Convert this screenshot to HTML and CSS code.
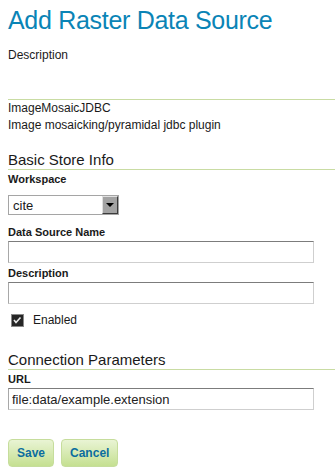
FILE: index.html
```html
<!DOCTYPE html>
<html lang="en">
<head>
    <meta charset="UTF-8">
    <meta name="viewport" content="width=device-width, initial-scale=1.0">
    <title>Add Raster Data Source</title>
    <link rel="stylesheet" href="styles.css">
</head>
<body>
    <div class="page">
        <h1 class="page-title">Add Raster Data Source</h1>
        <p class="page-desc">Description</p>

        <div class="store-type">
            <p>ImageMosaicJDBC</p>
            <p>Image mosaicking/pyramidal jdbc plugin</p>
        </div>

        <h3 class="section-title">Basic Store Info</h3>
        <label class="field-label">Workspace</label>
        <div class="select">
            <span class="select-value">cite</span>
            <span class="select-arrow"><span class="tri"></span></span>
        </div>

        <label class="field-label">Data Source Name</label>
        <input type="text" class="text-input">

        <label class="field-label label-tight">Description</label>
        <input type="text" class="text-input">

        <div class="check-row">
            <svg class="checkbox" width="13" height="13" viewBox="0 0 13 13">
                <rect x="0" y="0" width="13" height="13" fill="#8a8a8a"/>
                <rect x="1" y="1" width="11" height="11" fill="#262626"/>
                <polyline points="3,6 5,8.5 9.5,3.5" fill="none" stroke="#e8e8e8" stroke-width="1.6"/>
            </svg>
            <span>Enabled</span>
        </div>

        <h3 class="section-title section-conn">Connection Parameters</h3>
        <label class="field-label">URL</label>
        <input type="text" class="text-input" value="file:data/example.extension">

        <div class="buttons">
            <button class="btn">Save</button>
            <button class="btn">Cancel</button>
        </div>
    </div>
</body>
</html>
```

FILE: styles.css
```css
* {
    box-sizing: border-box;
    margin: 0;
    padding: 0;
}

body {
    font-family: "Liberation Sans", Arial, sans-serif;
    font-size: 12px;
    color: #1a1a1a;
    background: #fff;
}

.page {
    padding-left: 8px;
}

.page-title {
    font-size: 25px;
    font-weight: normal;
    line-height: 30px;
    letter-spacing: -0.3px;
    color: #0a84b6;
    margin-top: 5px;
}

.page-desc {
    line-height: 16px;
    margin-top: 12px;
}

.store-type {
    margin-top: 36px;
    border-top: 1px solid #c9dca3;
    line-height: 17px;
}

.section-title {
    font-size: 15px;
    font-weight: normal;
    line-height: 18px;
    margin-top: 17px;
    border-bottom: 1px solid #c9dca3;
}

.section-conn {
    margin-top: 24px;
}

.field-label {
    display: block;
    font-size: 11px;
    font-weight: bold;
    line-height: 14px;
    margin-top: 2px;
}

.select {
    display: flex;
    align-items: center;
    width: 111px;
    height: 20px;
    margin-top: 9px;
    border: 1px solid #a5a5a5;
    background: #fff;
}

.select-value {
    flex: 1;
    font-size: 13px;
    padding-left: 4px;
}

.select-arrow {
    display: flex;
    align-items: center;
    justify-content: center;
    width: 16px;
    height: 18px;
    background: #a3a3a3;
    border: 1px solid;
    border-color: #e0e0e0 #3c3c3c #3c3c3c #e0e0e0;
}

.tri {
    width: 0;
    height: 0;
    border-left: 4px solid transparent;
    border-right: 4px solid transparent;
    border-top: 4px solid #000;
}

.select + .field-label {
    margin-top: 10px;
}

.text-input {
    display: block;
    width: 306px;
    height: 22px;
    margin-top: 2px;
    border: 1px solid #cfcfcf;
    border-top-color: #7c7c7c;
    border-left-color: #a8a8a8;
    font-family: "Liberation Sans", Arial, sans-serif;
    font-size: 13px;
    padding: 0 3px;
    color: #222;
}

.label-tight {
    margin-top: 3px;
}

.check-row {
    display: flex;
    align-items: center;
    gap: 9px;
    margin-top: 9px;
    padding-left: 3px;
    font-size: 12px;
    line-height: 14px;
}

.buttons {
    display: flex;
    gap: 7px;
    margin-top: 29px;
}

.btn {
    height: 28px;
    padding: 0 8px;
    border: 1px solid #c6dd9c;
    border-radius: 4px;
    background: linear-gradient(#e9f4d4, #c5e091);
    color: #0b6d9f;
    font-family: "Liberation Sans", Arial, sans-serif;
    font-size: 12px;
    font-weight: bold;
    cursor: pointer;
}
```
